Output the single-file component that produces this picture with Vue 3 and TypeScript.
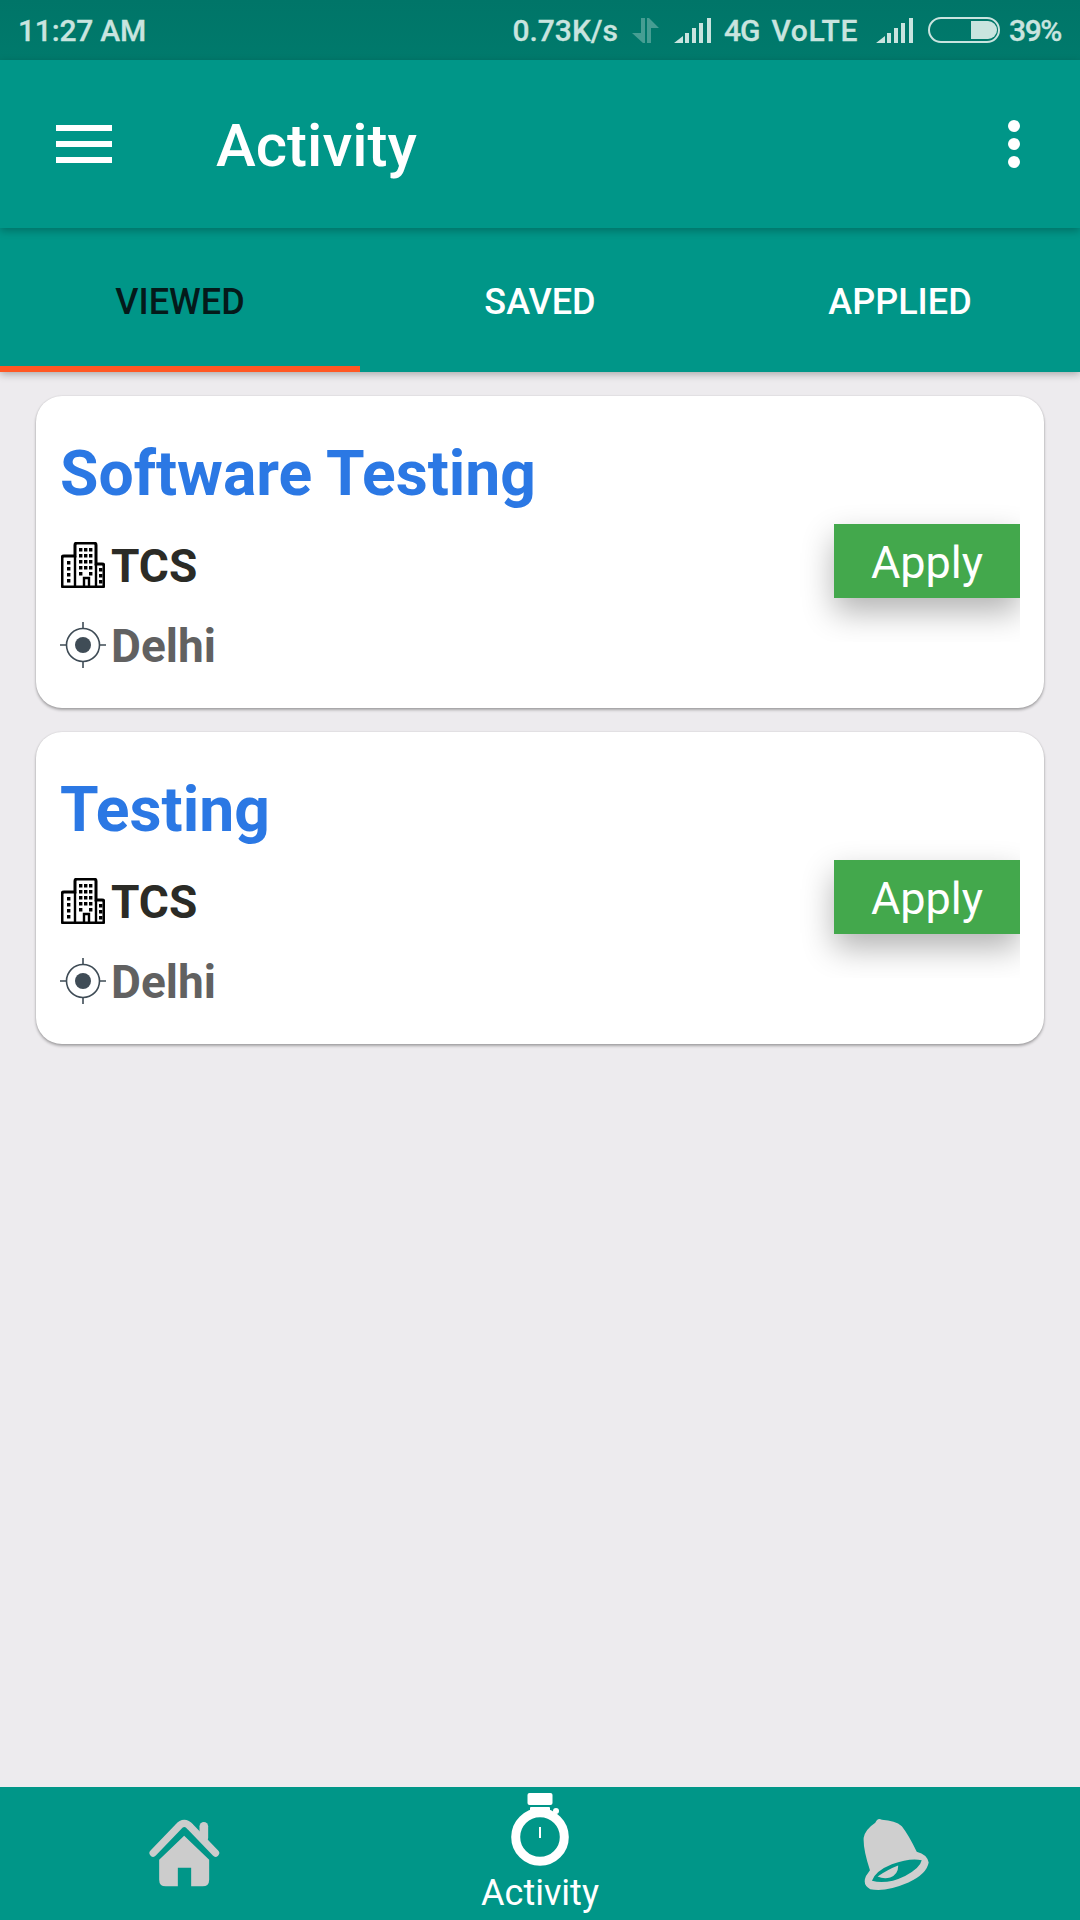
<script setup lang="ts">
import { ref } from "vue";

const tabs = ["VIEWED", "SAVED", "APPLIED"];
const activeTab = ref(0);

const jobs = [
  { title: "Software Testing", company: "TCS", city: "Delhi" },
  { title: "Testing", company: "TCS", city: "Delhi" },
];
</script>

<template>
  <div class="page">
    <div class="status">
      <span class="time">11:27 AM</span>
      <div class="status-right">
        <span class="speed">0.73K/s</span>
        <svg class="arrows" width="27" height="25" viewBox="0 0 27 25">
          <path d="M9 0h4v25h-2L0 15h9zM15 0h2l10 10h-8v15h-4z" fill="#c9e4df" opacity=".35" />
        </svg>
        <svg class="signal" width="37" height="25" viewBox="0 0 37 25">
          <path d="M0 25 9 18v7zM11 15h4v10h-4zM18 10h4v15h-4zM25 5h4v20h-4zM33 0h4v25h-4z" fill="#c9e4df" />
        </svg>
        <span class="net">4G</span>
        <span class="volte">VoLTE</span>
        <svg class="signal sim2" width="37" height="25" viewBox="0 0 37 25">
          <path d="M0 25 9 18v7zM11 15h4v10h-4zM18 10h4v15h-4zM25 5h4v20h-4zM33 0h4v25h-4z" fill="#c9e4df" />
        </svg>
        <svg class="battery" width="72" height="26" viewBox="0 0 72 26">
          <rect x="1" y="1" width="70" height="24" rx="12" fill="none" stroke="#c9e4df" stroke-width="2" />
          <path d="M43 4h17a9 9 0 0 1 0 18H43z" fill="#c9e4df" />
        </svg>
        <span class="percent">39%</span>
      </div>
    </div>

    <header class="toolbar">
      <div class="burger"><i></i><i></i><i></i></div>
      <h1 class="toolbar-title">Activity</h1>
      <div class="dots"><i></i><i></i><i></i></div>
    </header>

    <nav class="tabs">
      <div
        v-for="(tab, i) in tabs"
        :key="tab"
        class="tab"
        :class="{ active: i === activeTab }"
      >
        {{ tab }}
      </div>
    </nav>

    <main class="content">
      <section v-for="job in jobs" :key="job.title" class="card">
        <div class="info">
          <h2 class="job-title">{{ job.title }}</h2>
          <div class="row company">
            <svg class="building" width="44" height="46" viewBox="0 0 44 46">
              <path
                d="M14 14V3a2 2 0 0 1 2-2h17a2 2 0 0 1 2 2v19h6a2 2 0 0 1 2 2v19a2 2 0 0 1-2 2H3a2 2 0 0 1-2-2V16a2 2 0 0 1 2-2z"
                fill="#fff"
                stroke="#000"
                stroke-width="3"
              />
              <path d="M14 14v30M35 22v22M23 45V36h5v9" fill="none" stroke="#000" stroke-width="2.4" />
              <path
                d="M18 6h3.4v3.4h-3.4zM23 6h3.4v3.4h-3.4zM28 6h3.4v3.4h-3.4zM18 12h3.4v3.4h-3.4zM23 12h3.4v3.4h-3.4zM28 12h3.4v3.4h-3.4zM18 18h3.4v3.4h-3.4zM23 18h3.4v3.4h-3.4zM28 18h3.4v3.4h-3.4zM18 24h3.4v3.4h-3.4zM23 24h3.4v3.4h-3.4zM28 24h3.4v3.4h-3.4zM18 30h3.4v3.4h-3.4zM28 30h3.4v3.4h-3.4zM6 19h3.4v3.4H6zM6 25h3.4v3.4H6zM6 31h3.4v3.4H6zM6 37h3.4v3.4H6zM38 26h3.4v3.4h-3.4zM38 32h3.4v3.4h-3.4zM38 38h3.4v3.4h-3.4z"
                fill="#000"
              />
            </svg>
            <span>{{ job.company }}</span>
          </div>
          <div class="row city">
            <svg class="target" width="46" height="46" viewBox="0 0 46 46">
              <circle cx="23" cy="23" r="16.5" fill="none" stroke="#3f4c56" stroke-width="1.6" />
              <circle cx="23" cy="23" r="8" fill="#3f4c56" />
              <path d="M23 0v6M23 40v6M0 23h6M40 23h6" stroke="#3f4c56" stroke-width="1.6" />
            </svg>
            <span>{{ job.city }}</span>
          </div>
        </div>
        <div class="apply-clip">
          <button class="apply">Apply</button>
        </div>
      </section>
    </main>

    <footer class="bottom">
      <div class="bottom-item home">
        <svg width="72" height="70" viewBox="135 145 215 210">
          <path d="M150 250 225 172Q243 150 262 172L337 250" fill="none" stroke="#cccccc" stroke-width="22" stroke-linecap="round" stroke-linejoin="round" />
          <rect x="289" y="157" width="26" height="60" rx="13" fill="#cccccc" />
          <path d="M243 198 318 270V330Q318 350 298 350H264V294H224V350H188Q168 350 168 330V270Z" fill="#cccccc" />
        </svg>
      </div>
      <div class="bottom-item watch">
        <svg width="60" height="74" viewBox="0 0 60 74">
          <rect x="17.5" y="0" width="25" height="12" rx="2" fill="#fff" />
          <rect x="20" y="14" width="20" height="5" rx="1" fill="#fff" />
          <circle cx="46" cy="18" r="3" fill="#fff" />
          <circle cx="30" cy="44" r="24.3" fill="none" stroke="#fff" stroke-width="9" />
          <rect x="29" y="34" width="2" height="11" fill="#fff" />
        </svg>
        <span>Activity</span>
      </div>
      <div class="bottom-item bell">
        <svg width="68" height="75" viewBox="125 105 205 225">
          <path
            fill-rule="evenodd"
            fill="#cfcfcf"
            d="M165 125Q172 108 185 116Q225 118 245 135Q265 160 290 212Q322 220 326 245Q320 280 265 305Q195 335 150 325Q125 312 137 285L149 268Q128 205 130 170Q135 145 165 125ZM155 300Q200 312 255 285Q300 262 305 238Q270 230 215 250Q165 270 155 300ZM172 287Q205 265 234 254Q235 280 210 290Q190 295 172 287Z"
          />
        </svg>
      </div>
    </footer>
  </div>
</template>

<style>
html,
body {
  margin: 0;
  background: #ecebee;
}
</style>

<style scoped>
.page {
  width: 1080px;
  height: 1920px;
  display: flex;
  flex-direction: column;
  overflow: hidden;
  background: #edebee;
  font-family: Roboto, "Liberation Sans", sans-serif;
}

.status {
  height: 60px;
  flex: none;
  display: flex;
  align-items: center;
  justify-content: space-between;
  padding: 0 19px 0 18px;
  background: linear-gradient(#007568, #007a6c);
  color: #c9e4df;
  font-size: 30px;
  font-weight: 500;
  -webkit-text-stroke: 0.3px #c9e4df;
}
.time {
  letter-spacing: -0.2px;
}
.status-right {
  display: flex;
  align-items: center;
}
.speed {
  margin-right: -1px;
}
.arrows {
  margin-left: 15px;
}
.signal {
  margin-left: 15px;
}
.net {
  margin-left: 13px;
  letter-spacing: -1px;
}
.volte {
  margin-left: 12px;
  letter-spacing: 0.6px;
}
.sim2 {
  margin-left: 18px;
}
.battery {
  margin-left: 15px;
}
.percent {
  margin-left: 9px;
  letter-spacing: -1.4px;
}

.toolbar {
  position: relative;
  z-index: 2;
  height: 168px;
  flex: none;
  display: flex;
  align-items: center;
  padding: 0 60px 0 56px;
  background: #009688;
  box-shadow: 0 3px 8px rgba(0, 0, 0, 0.25);
}
.burger {
  width: 56px;
  display: flex;
  flex-direction: column;
  gap: 10px;
}
.burger i {
  height: 6px;
  background: #fff;
}
.toolbar-title {
  margin: 2px 0 0 104px;
  flex: 1;
  color: #fff;
  font-size: 60px;
  font-weight: 500;
}
.dots {
  display: flex;
  flex-direction: column;
  gap: 6px;
}
.dots i {
  width: 12px;
  height: 12px;
  border-radius: 50%;
  background: #fff;
}

.tabs {
  position: relative;
  z-index: 1;
  height: 144px;
  flex: none;
  display: grid;
  grid-template-columns: repeat(3, 1fr);
  background: #009688;
  box-shadow: 0 2px 8px rgba(0, 0, 0, 0.3);
}
.tab {
  display: flex;
  align-items: center;
  justify-content: center;
  padding-top: 4px;
  color: #fff;
  font-size: 36px;
  font-weight: 500;
}
.tab.active {
  color: #041a1a;
  box-shadow: inset 0 -6px 0 #ff5722;
}

.content {
  flex: 1;
  display: flex;
  flex-direction: column;
  gap: 24px;
  padding: 24px 36px 0;
}
.card {
  height: 312px;
  display: flex;
  justify-content: space-between;
  padding: 0 24px;
  background: #fff;
  border-radius: 26px;
  box-shadow: 0 2px 3px rgba(0, 0, 0, 0.3), 0 0 2px rgba(0, 0, 0, 0.12);
  box-sizing: border-box;
}
.info {
  padding-top: 42px;
}
.job-title {
  margin: 0 0 26px;
  color: #2b78e4;
  font-size: 62.4px;
  line-height: 72px;
  font-weight: 700;
}
.row {
  height: 60px;
  display: flex;
  align-items: center;
  gap: 6px;
  font-size: 46px;
  font-weight: 700;
}
.building {
  margin: -3px 0 0 1px;
}
.company {
  color: #2b2b26;
}
.city {
  margin-top: 20px;
  gap: 5px;
  color: #616161;
}
.target {
  margin-top: -2px;
}
.apply-clip {
  align-self: flex-start;
  margin-top: 104px;
  padding: 24px 0 44px 40px;
  overflow: hidden;
}
.apply {
  display: block;
  width: 186px;
  height: 74px;
  padding: 2px 0 0;
  border: 0;
  background: #43a84c;
  box-shadow: 0 14px 32px rgba(0, 0, 0, 0.3);
  color: #fff;
  font-family: Roboto, sans-serif;
  font-size: 45px;
}

.bottom {
  height: 133px;
  flex: none;
  display: grid;
  grid-template-columns: 362px 356px 362px;
  background: #009688;
}
.bottom-item {
  display: flex;
  flex-direction: column;
  align-items: center;
  color: #fff;
  font-size: 36px;
}
.home {
  padding: 31px 0 0 5px;
}
.watch {
  padding-top: 6px;
}
.watch span {
  margin-top: 5px;
  line-height: 42px;
}
.bell {
  padding: 29px 6px 0 0;
}
</style>
